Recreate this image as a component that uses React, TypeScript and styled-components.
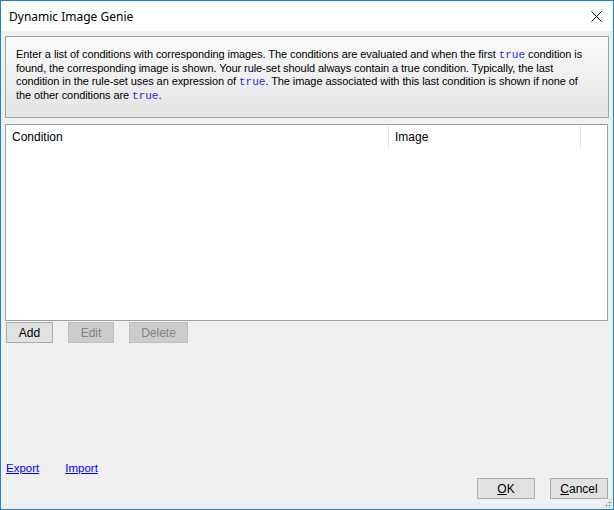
import React from 'react';
import styled, { createGlobalStyle } from 'styled-components';

const GlobalStyle = createGlobalStyle`
  html, body {
    margin: 0;
    padding: 0;
    background: #ffffff;
  }
`;

const Window = styled.div`
  box-sizing: border-box;
  width: 614px;
  height: 510px;
  border: 1px solid #1883d7;
  display: flex;
  flex-direction: column;
  background: #f0f0f0;
  font-family: "Liberation Sans", Arial, sans-serif;
  font-size: 11px;
  color: #000000;
`;

const TitleBar = styled.div`
  height: 30px;
  flex: none;
  background: #ffffff;
  display: flex;
  align-items: center;
  justify-content: space-between;
  padding: 0 0 0 8px;
`;

const Title = styled.span`
  font-family: "Noto Sans", "Liberation Sans", sans-serif;
  font-size: 12px;
  color: #000000;
`;

const CloseButton = styled.button`
  width: 34px;
  height: 30px;
  border: none;
  background: transparent;
  display: flex;
  align-items: center;
  justify-content: center;
  padding: 0;
`;

const Body = styled.div`
  flex: 1;
  display: flex;
  flex-direction: column;
  padding: 5px 4px 10px 4px;
`;

const InfoBox = styled.div`
  box-sizing: border-box;
  height: 82px;
  border: 1px solid #a3a3a3;
  background: linear-gradient(#fbfbfb, #e4e4e4);
  padding: 11px 10px 0 10px;
  font-size: 11px;
  letter-spacing: -0.08px;
`;

const InfoLine = styled.div`
  height: 13.5px;
  line-height: 13.5px;
  white-space: nowrap;
`;

const Code = styled.span`
  font-family: "Liberation Mono", "Courier New", monospace;
  font-size: 11px;
  line-height: 13px;
  color: #2a2ae0;
  letter-spacing: 0;
`;

const ListView = styled.div`
  box-sizing: border-box;
  margin-top: 6px;
  height: 197px;
  width: 603px;
  border: 1px solid #a0a0a0;
  background: #ffffff;
  padding-top: 1px;
`;

const HeaderRow = styled.div`
  display: grid;
  grid-template-columns: 383px 192px 1fr;
  height: 22px;
`;

const HeaderCell = styled.div<{ $last?: boolean }>`
  display: flex;
  align-items: center;
  padding-left: 6px;
  font-size: 12px;
  border-right: ${({ $last }) => ($last ? 'none' : '1px solid #e5e5e5')};
`;

const ButtonRow = styled.div`
  display: flex;
  gap: 15px;
  margin-top: 1px;
  padding-left: 1px;
`;

const Button = styled.button<{ $width: number; $disabled?: boolean }>`
  box-sizing: border-box;
  width: ${({ $width }) => $width}px;
  height: 21px;
  padding: 0;
  border: 1px solid ${({ $disabled }) => ($disabled ? '#bfbfbf' : '#adadad')};
  background: ${({ $disabled }) => ($disabled ? '#cccccc' : '#e1e1e1')};
  color: ${({ $disabled }) => ($disabled ? '#838383' : '#000000')};
  font-family: "Liberation Sans", Arial, sans-serif;
  font-size: 12px;
`;

const Spacer = styled.div`
  flex: 1;
`;

const Footer = styled.div`
  display: flex;
  align-items: flex-start;
`;

const Links = styled.div`
  display: flex;
  gap: 26px;
  padding-left: 1px;
`;

const Link = styled.a`
  color: #0000ff;
  text-decoration: underline;
  font-size: 11.5px;
  cursor: pointer;
`;

const DialogButtons = styled.div`
  margin-left: auto;
  display: flex;
  gap: 15px;
  margin-top: 16px;
  padding-right: 1px;
`;

const Grip = styled.div`
  position: absolute;
  right: 2px;
  bottom: 2px;
  width: 10px;
  height: 10px;
  background-image: radial-gradient(circle, #b8b8b8 1px, transparent 1.2px);
  background-size: 3px 3px;
  clip-path: polygon(100% 0, 100% 100%, 0 100%);
`;

const Frame = styled.div`
  position: relative;
`;

export default function App() {
  return (
    <>
      <GlobalStyle />
      <Frame>
        <Window>
          <TitleBar>
            <Title>Dynamic Image Genie</Title>
            <CloseButton aria-label="Close">
              <svg width="11" height="11" viewBox="0 0 11 11">
                <path d="M0.5 0.5 L10.5 10.5 M10.5 0.5 L0.5 10.5" stroke="#000" strokeWidth="1" />
              </svg>
            </CloseButton>
          </TitleBar>
          <Body>
            <InfoBox>
              <InfoLine>
                Enter a list of conditions with corresponding images. The conditions are evaluated and when the first{' '}
                <Code>true</Code> condition is
              </InfoLine>
              <InfoLine>
                found, the corresponding image is shown. Your rule-set should always contain a true condition. Typically, the last
              </InfoLine>
              <InfoLine>
                condition in the rule-set uses an expression of <Code>true</Code>. The image associated with this last
                condition is shown if none of
              </InfoLine>
              <InfoLine>
                the other conditions are <Code>true</Code>.
              </InfoLine>
            </InfoBox>
            <ListView>
              <HeaderRow>
                <HeaderCell>Condition</HeaderCell>
                <HeaderCell>Image</HeaderCell>
                <HeaderCell $last />
              </HeaderRow>
            </ListView>
            <ButtonRow>
              <Button $width={47}>Add</Button>
              <Button $width={46} $disabled>Edit</Button>
              <Button $width={59} $disabled>Delete</Button>
            </ButtonRow>
            <Spacer />
            <Footer>
              <Links>
                <Link>Export</Link>
                <Link>Import</Link>
              </Links>
              <DialogButtons>
                <Button $width={58}><u>O</u>K</Button>
                <Button $width={58}><u>C</u>ancel</Button>
              </DialogButtons>
            </Footer>
          </Body>
        </Window>
        <Grip />
      </Frame>
    </>
  );
}
